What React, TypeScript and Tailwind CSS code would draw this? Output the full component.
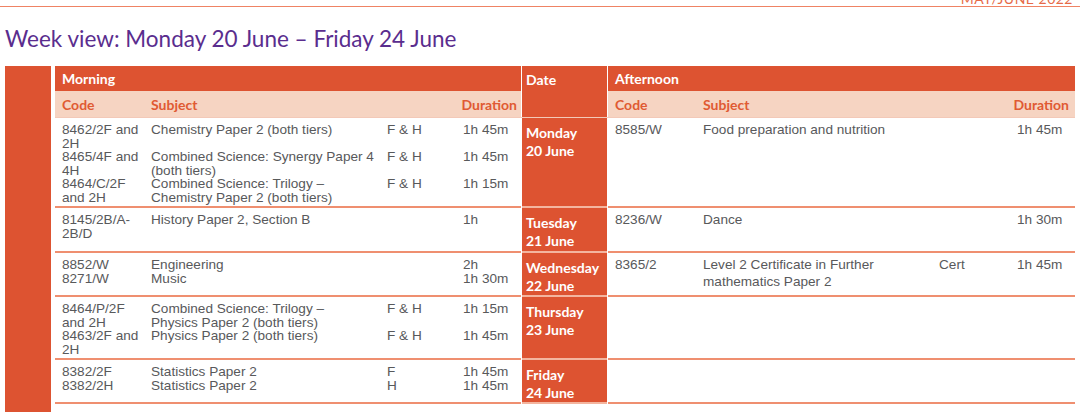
import React from 'react'

type Entry = {
  code: string[]
  subject: string[]
  tier?: string
  duration: string[]
}

type Day = {
  day: string
  date: string
  height: string
  morning: Entry[]
  afternoon: Entry[]
  afternoonLoose?: boolean
}

const days: Day[] = [
  {
    day: 'Monday',
    date: '20 June',
    height: 'h-[90px]',
    morning: [
      { code: ['8462/2F and', '2H'], subject: ['Chemistry Paper 2 (both tiers)'], tier: 'F & H', duration: ['1h 45m'] },
      { code: ['8465/4F and', '4H'], subject: ['Combined Science: Synergy Paper 4', '(both tiers)'], tier: 'F & H', duration: ['1h 45m'] },
      { code: ['8464/C/2F', 'and 2H'], subject: ['Combined Science: Trilogy –', 'Chemistry Paper 2 (both tiers)'], tier: 'F & H', duration: ['1h 15m'] },
    ],
    afternoon: [{ code: ['8585/W'], subject: ['Food preparation and nutrition'], duration: ['1h 45m'] }],
  },
  {
    day: 'Tuesday',
    date: '21 June',
    height: 'h-[45px]',
    morning: [{ code: ['8145/2B/A-', '2B/D'], subject: ['History Paper 2, Section B'], duration: ['1h'] }],
    afternoon: [{ code: ['8236/W'], subject: ['Dance'], duration: ['1h 30m'] }],
  },
  {
    day: 'Wednesday',
    date: '22 June',
    height: 'h-[44px]',
    morning: [
      { code: ['8852/W', '8271/W'], subject: ['Engineering', 'Music'], duration: ['2h', '1h 30m'] },
    ],
    afternoon: [
      { code: ['8365/2'], subject: ['Level 2 Certificate in Further', 'mathematics Paper 2'], tier: 'Cert', duration: ['1h 45m'] },
    ],
    afternoonLoose: true,
  },
  {
    day: 'Thursday',
    date: '23 June',
    height: 'h-[63px]',
    morning: [
      { code: ['8464/P/2F', 'and 2H'], subject: ['Combined Science: Trilogy –', 'Physics Paper 2 (both tiers)'], tier: 'F & H', duration: ['1h 15m'] },
      { code: ['8463/2F and', '2H'], subject: ['Physics Paper 2 (both tiers)'], tier: 'F & H', duration: ['1h 45m'] },
    ],
    afternoon: [],
  },
  {
    day: 'Friday',
    date: '24 June',
    height: 'h-[44px]',
    morning: [
      { code: ['8382/2F', '8382/2H'], subject: ['Statistics Paper 2', 'Statistics Paper 2'], tier: 'F\nH', duration: ['1h 45m', '1h 45m'] },
    ],
    afternoon: [],
  },
]

const heading = { fontFamily: 'Lato, "Open Sans", sans-serif' }
const body = { fontFamily: '"Liberation Sans", Arial, sans-serif' }

function Lines({ lines }: { lines: string[] }) {
  return (
    <>
      {lines.map((l, i) => (
        <div key={i}>{l}</div>
      ))}
    </>
  )
}

function Entries({ entries, cols, loose }: { entries: Entry[]; cols: string; loose?: boolean }) {
  return (
    <div
      className={`pl-[7px] text-[13.6px] text-[#58595b] ${loose ? 'pt-[3px] leading-[17px]' : 'pt-[5px] leading-[13.5px]'}`}
      style={body}
    >
      {entries.map((e, i) => (
        <div key={i} className={`grid ${cols}`}>
          <div><Lines lines={e.code} /></div>
          <div><Lines lines={e.subject} /></div>
          <div className="whitespace-pre-line">{e.tier}</div>
          <div><Lines lines={e.duration} /></div>
        </div>
      ))}
    </div>
  )
}

const morningCols = 'grid-cols-[89px_236px_76px_1fr]'
const afternoonCols = 'grid-cols-[88px_236px_78px_1fr]'

export default function App() {
  return (
    <div className="w-[1080px] h-[412px] overflow-hidden bg-white">
      <div className="flex justify-end items-end h-[6px] overflow-hidden pr-[7px]">
        <span className="text-[14px] leading-none tracking-[0.5px] text-[#e66a48]" style={heading}>
          MAY/JUNE 2022
        </span>
      </div>
      <div className="h-px bg-[#ef8364]" />

      <h1 className="mt-[17px] px-[5px] text-[22.5px] leading-[30px] text-[#5a2d8e]" style={heading}>
        Week view: Monday 20 June – Friday 24 June
      </h1>

      <div className="mt-[12px] flex gap-[4px] px-[5px]">
        <div className="w-[46px] h-[360px] shrink-0 bg-[#dd5331]" />

        <div className="flex-1 flex flex-col">
          {/* header rows */}
          <div className="grid grid-cols-[466px_85px_1fr] gap-x-px">
            <div className="flex flex-col">
              <div className="h-[25px] bg-[#dd5331] flex items-center pl-[7px] text-[14px] font-bold text-white" style={heading}>
                Morning
              </div>
              <div className="h-[26px] bg-[#f6d4c2] flex items-center pl-[7px] pr-[4px] text-[14px] font-bold text-[#e05a33]" style={heading}>
                <span className="w-[89px]">Code</span>
                <span className="flex-1">Subject</span>
                <span>Duration</span>
              </div>
            </div>
            <div className="bg-[#dd5331] pl-[4px] pt-[3px] text-[14px] font-bold text-white" style={heading}>
              Date
            </div>
            <div className="flex flex-col">
              <div className="h-[25px] bg-[#dd5331] flex items-center pl-[7px] text-[14px] font-bold text-white" style={heading}>
                Afternoon
              </div>
              <div className="h-[26px] bg-[#f6d4c2] flex items-center pl-[7px] pr-[6px] text-[14px] font-bold text-[#e05a33]" style={heading}>
                <span className="w-[88px]">Code</span>
                <span className="flex-1">Subject</span>
                <span>Duration</span>
              </div>
            </div>
          </div>

          <div className="h-px bg-[#f3c9b8]" />

          {days.map((d) => (
            <div key={d.day} className={`grid grid-cols-[466px_85px_1fr] gap-x-px ${d.height}`}>
              <div className="border-b-2 border-[#ef8f70]">
                <Entries entries={d.morning} cols={morningCols} />
              </div>
              <div
                className="bg-[#dd5331] border-b-2 border-[#f3b59f] pl-[4px] pt-[6px] text-[14px] leading-[18px] font-bold text-white"
                style={heading}
              >
                <div>{d.day}</div>
                <div>{d.date}</div>
              </div>
              <div className="border-b-2 border-[#ef8f70]">
                <Entries entries={d.afternoon} cols={afternoonCols} loose={d.afternoonLoose} />
              </div>
            </div>
          ))}
        </div>
      </div>
    </div>
  )
}
